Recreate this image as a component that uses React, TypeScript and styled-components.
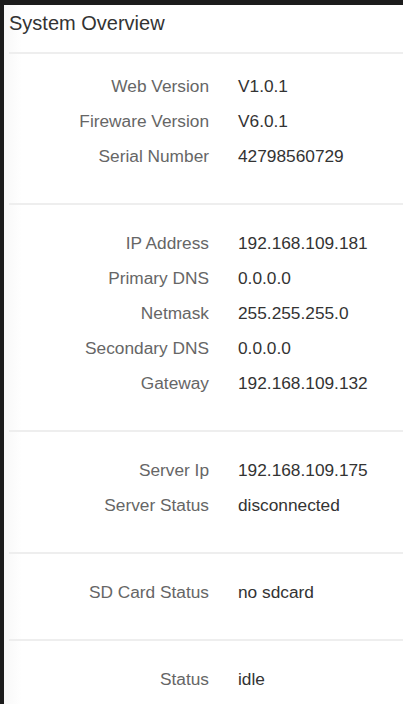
import * as React from 'react';
import styled, { createGlobalStyle } from 'styled-components';

interface Item {
    label: string
    value: string
}

const sections: Item[][] = [
    [
        { label: 'Web Version', value: 'V1.0.1' },
        { label: 'Fireware Version', value: 'V6.0.1' },
        { label: 'Serial Number', value: '42798560729' },
    ],
    [
        { label: 'IP Address', value: '192.168.109.181' },
        { label: 'Primary DNS', value: '0.0.0.0' },
        { label: 'Netmask', value: '255.255.255.0' },
        { label: 'Secondary DNS', value: '0.0.0.0' },
        { label: 'Gateway', value: '192.168.109.132' },
    ],
    [
        { label: 'Server Ip', value: '192.168.109.175' },
        { label: 'Server Status', value: 'disconnected' },
    ],
    [
        { label: 'SD Card Status', value: 'no sdcard' },
    ],
    [
        { label: 'Status', value: 'idle' },
    ],
];

export default function App() {
    return (
        <>
            <GlobalStyle />
            <StyledPanel>
                <StyledHeader>
                    <StyledTitle>System Overview</StyledTitle>
                </StyledHeader>
                {sections.map((items, i) => (
                    <StyledSection key={i} first={i === 0} last={i === sections.length - 1}>
                        {items.map(item => (
                            <StyledRow key={item.label}>
                                <StyledLabel>{item.label}</StyledLabel>
                                <StyledValue>{item.value}</StyledValue>
                            </StyledRow>
                        ))}
                    </StyledSection>
                ))}
            </StyledPanel>
        </>
    );
}

const GlobalStyle = createGlobalStyle`
html, body {
    margin: 0;
    padding: 0;
    height: 100%;
    overflow: hidden;
    background: #1c1c1c;
    font-family: "Liberation Sans", Arial, sans-serif;
}
`
const StyledPanel = styled.div`
margin: 5px 0 0 4px;
padding-left: 5px;
min-height: 720px;
background: linear-gradient(to right, #f8f8f8 0, #ffffff 18px);
`
const StyledHeader = styled.header`
padding-top: 6.5px;
height: 40.5px;
border-bottom: 2px solid #eeeeee;
`
const StyledTitle = styled.h1`
margin: 0;
font-size: 20px;
line-height: 23px;
font-weight: normal;
color: #333333;
`
const StyledSection = styled.section<{ first?: boolean; last?: boolean }>`
padding-top: ${p => (p.first ? '14.5px' : '20.5px')};
padding-bottom: 29.5px;
border-bottom: ${p => (p.last ? 'none' : '2px solid #eeeeee')};
`
const StyledRow = styled.div`
display: grid;
grid-template-columns: 200px 1fr;
column-gap: 29px;
height: 35px;
line-height: 35px;
font-size: 17.3px;
`
const StyledLabel = styled.span`
text-align: right;
color: #666666;
white-space: nowrap;
`
const StyledValue = styled.span`
color: #333333;
white-space: nowrap;
`
